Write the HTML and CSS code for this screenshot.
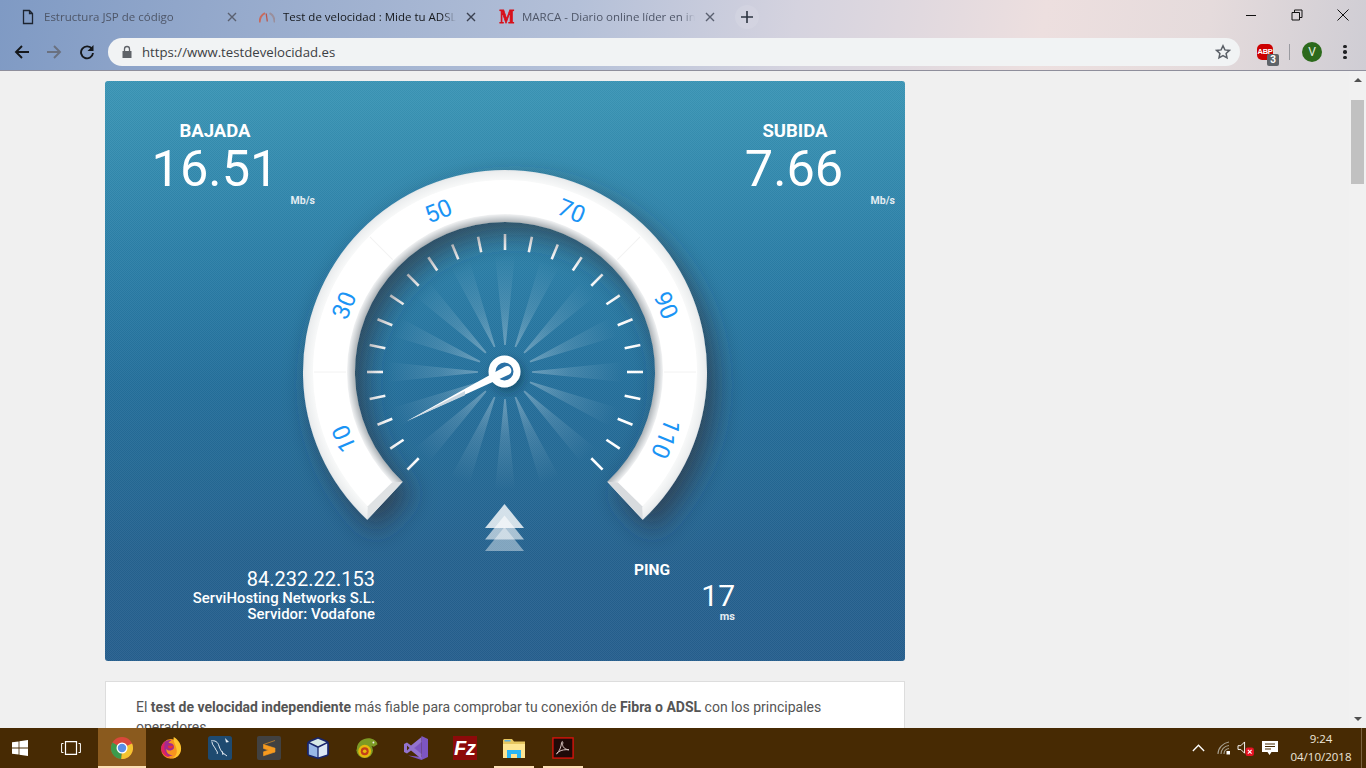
FILE: index.html
```html
<!DOCTYPE html>
<html lang="es">
<head>
<meta charset="utf-8">
<title>Test de velocidad</title>
<link rel="stylesheet" href="styles.css">
</head>
<body>
<header class="browser">
  <div class="tabstrip">
    <div class="tab">
      <svg class="favicon" viewBox="0 0 16 16"><path d="M3.500 1.500h6l3 3v10h-9z M9.500 1.500v3h3" fill="none" stroke="#1d2430" stroke-width="1.300"/></svg>
      <span class="tab-title muted">Estructura JSP de código</span>
      <svg class="tab-close" viewBox="0 0 12 12"><path d="M2 2l8 8M10 2l-8 8" stroke="#5a6070" stroke-width="1.400"/></svg>
    </div>
    <div class="tab">
      <svg class="favicon" viewBox="0 0 16 16"><path d="M.5 13.500C.8 9 3 5.500 6 4.200" fill="none" stroke="#c96a5c" stroke-width="2"/><path d="M10.500 4.200c3 1.300 5 4.800 5.200 9.300" fill="none" stroke="#9a8f9c" stroke-width="2"/><path d="M8.300 12.500L7.200 4.500" stroke="#b8564c" stroke-width="1.300"/></svg>
      <span class="tab-title">Test de velocidad : Mide tu ADSL</span>
      <svg class="tab-close" viewBox="0 0 12 12"><path d="M2 2l8 8M10 2l-8 8" stroke="#3a4050" stroke-width="1.400"/></svg>
    </div>
    <div class="tab">
      <span class="favicon marca">M</span>
      <span class="tab-title muted">MARCA - Diario online líder en información</span>
      <svg class="tab-close" viewBox="0 0 12 12"><path d="M2 2l8 8M10 2l-8 8" stroke="#5a6070" stroke-width="1.400"/></svg>
    </div>
    <div class="new-tab"><svg viewBox="0 0 12 12"><path d="M6 0v12M0 6h12" stroke="#2c3440" stroke-width="1.600"/></svg></div>
    <div class="win-controls">
      <div class="win-btn"><svg viewBox="0 0 12 12"><path d="M1 6.500h10" stroke="#111" stroke-width="1"/></svg></div>
      <div class="win-btn"><svg viewBox="0 0 12 12"><path d="M1 3.500h7.500v7.500H1z M3.500 3.500V1H11v7.500H8.500" fill="none" stroke="#111" stroke-width="1"/></svg></div>
      <div class="win-btn"><svg viewBox="0 0 12 12"><path d="M.5.500l11 11M11.500.500l-11 11" stroke="#111" stroke-width="1"/></svg></div>
    </div>
  </div>
  <div class="toolbar">
    <div class="nav-btn"><svg viewBox="0 0 16 16"><path d="M15 8H2M8 2L2 8l6 6" fill="none" stroke="#15181c" stroke-width="1.900"/></svg></div>
    <div class="nav-btn"><svg viewBox="0 0 16 16"><path d="M1 8h13M8 2l6 6-6 6" fill="none" stroke="#6a7180" stroke-width="1.900"/></svg></div>
    <div class="nav-btn reload"><svg viewBox="0 0 16 16"><path d="M13 5A6 6 0 1 0 14 9" fill="none" stroke="#15181c" stroke-width="1.900"/><path d="M14.500 1v6h-6z" fill="#15181c"/></svg></div>
    <div class="omnibox">
      <svg class="lock" viewBox="0 0 12 14"><path d="M1.500 6h9v7h-9z" fill="#5f6368"/><path d="M3.500 6V4a2.500 2.500 0 0 1 5 0v2" fill="none" stroke="#5f6368" stroke-width="1.300"/></svg>
      <span class="url">https://www.testdevelocidad.es</span>
      <svg class="star" viewBox="0 0 16 16"><path d="M8 1.800l1.900 4.100 4.500.5-3.300 3 .9 4.500L8 11.700l-4 2.200.9-4.500-3.300-3 4.500-.5z" fill="none" stroke="#5a5f66" stroke-width="1.500"/></svg>
    </div>
    <div class="abp"><span class="abp-sign">ABP</span><span class="abp-badge">3</span></div>
    <div class="tool-divider"></div>
    <div class="avatar">V</div>
    <div class="menu-dots"><i></i><i></i><i></i></div>
  </div>
</header>

<div class="viewport">
  <main class="page">
    <section class="panel">
      <svg class="gauge" viewBox="0 0 800 580">
        <defs>
          <radialGradient id="rayFade" gradientUnits="userSpaceOnUse" cx="0" cy="0" r="118">
            <stop offset=".2" stop-color="#fff" stop-opacity=".32"/>
            <stop offset=".55" stop-color="#fff" stop-opacity=".13"/>
            <stop offset="1" stop-color="#fff" stop-opacity="0"/>
          </radialGradient>
          <radialGradient id="bevel" gradientUnits="userSpaceOnUse" cx="0" cy="0" r="202">
            <stop offset=".7426" stop-color="#adb2b6"/>
            <stop offset=".76" stop-color="#ccd0d3"/>
            <stop offset=".782" stop-color="#f2f3f4"/>
            <stop offset=".95" stop-color="#f8f9f9"/>
            <stop offset=".99" stop-color="#eceeef"/>
            <stop offset="1" stop-color="#e4e6e8"/>
          </radialGradient>
          <filter id="ringShadow" x="-30%" y="-30%" width="160%" height="160%">
            <feDropShadow dx="9" dy="12" stdDeviation="13" flood-color="#33333a" flood-opacity=".65"/>
          </filter>
          <filter id="hubShadow" x="-50%" y="-50%" width="200%" height="200%">
            <feDropShadow dx="3" dy="4" stdDeviation="4" flood-color="#123" flood-opacity=".4"/>
          </filter>
          <path id="ray" d="M-.8 -27 L.8 -27 L10 -118 L-10 -118 Z" fill="url(#rayFade)"/>
          <line id="tick" x1="0" y1="-122" x2="0" y2="-138" stroke="#fff" stroke-width="2.600"/>
          <line id="seam" x1="0" y1="-159" x2="0" y2="-191" stroke="#f2f2f2" stroke-width="1"/>
        </defs>
        <g transform="translate(400 291)">
          <g>
            <use href="#ray"/><use href="#ray" transform="rotate(22.5)"/><use href="#ray" transform="rotate(45)"/><use href="#ray" transform="rotate(67.5)"/>
            <use href="#ray" transform="rotate(90)"/><use href="#ray" transform="rotate(112.5)"/><use href="#ray" transform="rotate(135)"/><use href="#ray" transform="rotate(157.5)"/>
            <use href="#ray" transform="rotate(180)"/><use href="#ray" transform="rotate(202.5)"/><use href="#ray" transform="rotate(225)"/><use href="#ray" transform="rotate(247.5)"/>
            <use href="#ray" transform="rotate(270)"/><use href="#ray" transform="rotate(292.5)"/><use href="#ray" transform="rotate(315)"/><use href="#ray" transform="rotate(337.5)"/>
          </g>
          <g>
            <use href="#tick" transform="rotate(-135)"/><use href="#tick" transform="rotate(-123.75)"/><use href="#tick" transform="rotate(-112.5)"/><use href="#tick" transform="rotate(-101.25)"/>
            <use href="#tick" transform="rotate(-90)"/><use href="#tick" transform="rotate(-78.75)"/><use href="#tick" transform="rotate(-67.5)"/><use href="#tick" transform="rotate(-56.25)"/>
            <use href="#tick" transform="rotate(-45)"/><use href="#tick" transform="rotate(-33.75)"/><use href="#tick" transform="rotate(-22.5)"/><use href="#tick" transform="rotate(-11.25)"/>
            <use href="#tick"/>
            <use href="#tick" transform="rotate(11.25)"/><use href="#tick" transform="rotate(22.5)"/><use href="#tick" transform="rotate(33.75)"/><use href="#tick" transform="rotate(45)"/>
            <use href="#tick" transform="rotate(56.25)"/><use href="#tick" transform="rotate(67.5)"/><use href="#tick" transform="rotate(78.75)"/><use href="#tick" transform="rotate(90)"/>
            <use href="#tick" transform="rotate(101.25)"/><use href="#tick" transform="rotate(112.5)"/><use href="#tick" transform="rotate(123.75)"/><use href="#tick" transform="rotate(135)"/>
          </g>
          <path filter="url(#ringShadow)" fill="url(#bevel)" d="M-137.800 147.700A202 202 0 1 1 137.800 147.700L102.300 109.700A150 150 0 1 0 -102.300 109.700Z"/>
          <path fill="#fff" d="M-137.200 134.300A192 192 0 1 1 137.200 134.300L112.900 110.600A158 158 0 1 0 -112.900 110.600Z"/>
          <path fill="#dfe2e4" d="M-137.800 147.700L-102.300 109.700L-112.900 110.600L-137.200 134.300Z"/>
          <path fill="#d8dbde" d="M137.800 147.700L102.300 109.700L112.900 110.600L137.200 134.300Z"/>
          <use href="#seam" transform="rotate(-90)"/><use href="#seam" transform="rotate(-45)"/><use href="#seam" transform="rotate(45)"/><use href="#seam" transform="rotate(90)"/>
          <g class="scale">
            <text transform="rotate(-112.5) translate(0 -166)">10</text>
            <text transform="rotate(-67.5) translate(0 -166)">30</text>
            <text transform="rotate(-22.5) translate(0 -166)">50</text>
            <text transform="rotate(22.5) translate(0 -166)">70</text>
            <text transform="rotate(67.5) translate(0 -166)">90</text>
            <text transform="rotate(112.5) translate(0 -166)">110</text>
          </g>
          <circle cx="-.5" cy="-.5" r="12.500" fill="#2a6fa5" stroke="#fff" stroke-width="7" filter="url(#hubShadow)"/>
          <path d="M-98 49 L.2 -5.600 A4.500 4.500 0 0 1 4.200 2.400 Z" fill="#fff"/>
          <path d="M-98 49 L-40 19 L-40 23.200 Z" fill="#c9d6e0"/>
        </g>
        <g class="stack">
          <path d="M399.500 423l19.500 24h-39z" opacity=".8"/>
          <path d="M399.500 434.500l19.500 24h-39z" opacity=".6"/>
          <path d="M399.500 446l19.500 24h-39z" opacity=".42"/>
        </g>
      </svg>
      <div class="readouts">
        <div class="stats-top">
          <div class="stat stat-down">
            <div class="stat-label">BAJADA</div>
            <div class="stat-value">16.51</div>
            <div class="stat-unit">Mb/s</div>
          </div>
          <div class="stat stat-up">
            <div class="stat-label">SUBIDA</div>
            <div class="stat-value">7.66</div>
            <div class="stat-unit">Mb/s</div>
          </div>
        </div>
        <div class="stats-bottom">
          <div class="connection">
            <div class="ip">84.232.22.153</div>
            <div class="isp">ServiHosting Networks S.L.</div>
            <div class="isp">Servidor: Vodafone</div>
          </div>
          <div class="ping">
            <div class="ping-label">PING</div>
            <div class="ping-value">17</div>
            <div class="ping-unit">ms</div>
          </div>
        </div>
      </div>
    </section>
    <section class="intro">
      <p>El <strong>test de velocidad independiente</strong> más fiable para comprobar tu conexión de <strong>Fibra o ADSL</strong> con los principales operadores</p>
    </section>
  </main>
  <aside class="scrollbar">
    <div class="arrow-up"></div>
    <div class="thumb"></div>
    <div class="arrow-down"></div>
  </aside>
</div>

<footer class="taskbar">
  <div class="start"><svg viewBox="0 0 16 16"><path d="M0 2.300l6.600-.9v6.200H0zM7.400 1.300L16 0v7.600H7.400zM0 8.400h6.600v6.200L0 13.700zM7.400 8.400H16V16l-8.600-1.300z" fill="#fff"/></svg></div>
  <div class="taskview"><svg viewBox="0 0 20 14"><path d="M4.500 .6h11v12.800h-11z" fill="none" stroke="#fff" stroke-width="1.200"/><path d="M2.500 2.500H.6v9h1.900M17.500 2.500h1.900v9h-1.900" fill="none" stroke="#fff" stroke-width="1"/></svg></div>
  <div class="app active">
    <svg class="ico-22" viewBox="0 0 24 24"><circle cx="12" cy="12" r="12" fill="#d9483b"/><path d="M12 12L23 7.200A12 12 0 0 1 11 24z" fill="#f4c430"/><path d="M12 12L11 24A12 12 0 0 1 1.500 6z" fill="#3c9a4c"/><circle cx="12" cy="12" r="6" fill="#fff"/><circle cx="12" cy="12" r="4.600" fill="#5a8fe6"/></svg>
  </div>
  <div class="app">
    <svg class="ico-22" viewBox="0 0 24 24"><circle cx="12" cy="13" r="10.800" fill="#f7941e"/><path d="M1.300 12C2 6 7 2.500 12.500 3.500c-2 1-3 2-3 3 4.500-.5 6.500 3 5.500 6-2 3-7 3-8 .3-.8 4 3 7.500 7 6.900C9 23 1.300 19 1.300 12z" fill="#a32a8f"/><path d="M1.300 12c.5-3 2-5 4-6.500 0 3-1.500 6 0 10 1 3 3 5.500 6 6.500C6 22.500 1.300 18 1.300 12z" fill="#e0245e"/><path d="M15 0c5 3 8 7.500 8 12.500 0 6-4.500 10.500-10 11 4.500-2.500 6-6 5-10.500C17 8 14 5 15 0z" fill="#ffc52e"/><path d="M8.500 9.500h6.500l-2 2.800H9.500z" fill="#e8352c"/></svg>
  </div>
  <div class="app">
    <svg viewBox="0 0 24 24"><rect width="24" height="24" rx="2.500" fill="#1e4a70"/><path d="M3 5c4-1 7 1 8 5 1 3 2 5 4 7l4 3M4 6c0 3 3 5 4 8 1 1 2 3 1 4M14 15l1 4" fill="none" stroke="#e0e8f0" stroke-width="1"/><path d="M17 2l4 4-3 .5z" fill="#e8eef4"/></svg>
  </div>
  <div class="app">
    <svg viewBox="0 0 24 24"><rect width="24" height="24" rx="2" fill="#414141"/><path d="M18 4.500L6.500 8.500v4l11 3.500v-4l-11-3.500M18 12l-11.500 3.800v4L18 16z" fill="#f79a1e" stroke="#f79a1e" stroke-width=".6"/></svg>
  </div>
  <div class="app">
    <svg class="ico-22" viewBox="0 0 24 24"><path d="M12 0l10 4q2 1 2 3v11q0 2-2 3l-10 3-10-3q-2-1-2-3V7q0-2 2-3z" fill="#18246a"/><path d="M12 2l9 3.600-9 4.400-9-4.400z" fill="#d6e8e6"/><path d="M2 7l9.300 4.700V22L2 19z" fill="#98b8e6"/><path d="M22 7l-9.300 4.700V22L22 19z" fill="#dce8f4"/></svg>
  </div>
  <div class="app">
    <svg class="ico-22" viewBox="0 0 24 24"><ellipse cx="9.500" cy="14.500" rx="9" ry="8.500" fill="#7d9a24"/><path d="M1 12C2 4 10 0 17 2c3 1 6 3 6.500 6l-4 2.500c-3-1-5-1-7-.5L3 18z" fill="#7d9a24"/><circle cx="9.500" cy="15.500" r="7" fill="#e6b80c"/><circle cx="9.500" cy="15.500" r="4.300" fill="#c2401a"/><circle cx="9.500" cy="15.500" r="2" fill="#e6b80c"/><circle cx="19" cy="6" r="1" fill="#eee"/></svg>
  </div>
  <div class="app">
    <svg viewBox="0 0 24 24"><path d="M17.500 0L24 3v18l-6.500 3L4 19.500l13.500 1.500z" fill="#7d55c2"/><path d="M17.500 5v14L10 12z" fill="#7d55c2"/><path d="M0 8l3-1.500 4 3L17.500 1v5l-7 6 7 6v5L7 14.500l-4 3L0 16z" fill="#9373cf"/><path d="M3 9.500v5l2.500-2.500z" fill="#472a03"/></svg>
  </div>
  <div class="app">
    <span class="fz">Fz</span>
  </div>
  <div class="app open">
    <svg class="ico-folder" viewBox="0 0 22 19"><path d="M1 0h8l2 2.500h11V19H0V1z" fill="#e6c660"/><path d="M0 5h22v14H0z" fill="#fde592"/><path d="M1.500 1h6v1.500h-6z" fill="#5db0e0"/><path d="M4 11h14v8h-4v-4H8v4H4z" fill="#29b6f6"/></svg>
  </div>
  <div class="app open">
    <svg class="ico-22" viewBox="0 0 24 24"><rect x="1" y="1" width="22" height="22" fill="#1f0a08" stroke="#d8140c" stroke-width="1.500"/><path d="M5 18c3-2 5-7 5.500-12 .3-2 2-1 1 2 0 3 2.500 5.500 7 6-4-.5-8 0-11 2-1.500 2-3 3-2.500 2z" fill="none" stroke="#e8d4d0" stroke-width="1"/></svg>
  </div>
  <div class="tray">
    <svg class="tray-chevron" viewBox="0 0 12 7"><path d="M.8 6.300L6 1l5.200 5.300" fill="none" stroke="#fff" stroke-width="1.200"/></svg>
    <svg class="tray-wifi" viewBox="0 0 14 14"><path d="M1 13C1 7 6 2 12 1M4 13c0-4 3-8 8-8.500M7 13c0-3 2-5 5-5.500" fill="none" stroke="#a8a090" stroke-width="1.100"/><rect x="9.500" y="10" width="3.500" height="3.500" fill="#fff"/></svg>
    <svg class="tray-sound" viewBox="0 0 18 16"><path d="M1 5h3l4-4v12l-4-4H1z" fill="none" stroke="#fff" stroke-width="1"/><rect x="9" y="7" width="9" height="9" rx="2.500" fill="#e81123"/><path d="M11.500 9.500l4 4M15.500 9.500l-4 4" stroke="#fff" stroke-width="1.200"/></svg>
    <svg class="tray-action" viewBox="0 0 16 16"><path d="M0 1h16v11H9.500L7.500 15l-2-3H0z" fill="#fff"/><path d="M3 4h10M3 6.500h10M3 9h6" stroke="#472a03" stroke-width="1"/></svg>
    <div class="clock"><div>9:24</div><div>04/10/2018</div></div>
    <div class="show-desktop"></div>
  </div>
</footer>
</body>
</html>
```

FILE: styles.css
```css
* { box-sizing: border-box; }
html, body { margin: 0; height: 768px; overflow: hidden; }
body { display: flex; flex-direction: column; width: 1366px; font-family: Roboto, "Liberation Sans", sans-serif; background: #f0f0f0; color: #555; }

/* browser frame */
.browser { height: 71px; flex: none; border-bottom: 1px solid #8f8f9c; background: linear-gradient(100deg, #7f9ac4 0, #93a8cb 15%, #b4c0d8 42%, #d5d3df 58%, #eddfdf 76%, #e5dbdc 88%, #cfcdd4 100%); }
.tabstrip { height: 34px; display: flex; align-items: center; padding-left: 12px; }
.tab { width: 239px; height: 34px; display: flex; align-items: center; padding: 0 13px 0 8px; }
.favicon { width: 16px; height: 16px; flex: none; }
.marca { font: 900 19px/16px "Liberation Serif", serif; color: #d8101a; text-align: center; -webkit-text-stroke: .8px #d8101a; transform: scaleX(.82); }
.tab-title { flex: none; width: 173px; margin: 0 9px 0 8px; font: 11.500px/16px "Open Sans", sans-serif; color: #15181c; white-space: nowrap; overflow: hidden; mask-image: linear-gradient(90deg, #000 92%, transparent); }
.tab-title.muted { color: #4e5668; }
.tab-close { width: 12px; height: 12px; flex: none; }
.new-tab { width: 24px; height: 24px; margin-left: 6px; border-radius: 50%; background: rgba(255,255,255,.1); display: flex; align-items: center; justify-content: center; }
.new-tab svg { width: 12px; height: 12px; }
.win-controls { margin-left: auto; display: flex; align-self: flex-start; }
.win-btn { width: 46px; height: 29px; display: flex; align-items: center; justify-content: center; }
.win-btn svg { width: 12px; height: 12px; }

.toolbar { height: 36px; padding: 4px 0 4px 6px; display: flex; align-items: center; }
.nav-btn { width: 32px; height: 28px; display: flex; align-items: center; justify-content: center; }
.nav-btn svg { width: 16px; height: 16px; }
.reload { margin-left: 1px; }
.omnibox { width: 1132px; height: 28px; margin-left: 5px; padding: 0 9px 0 13px; border-radius: 14px; background: #f1f3f4; display: flex; align-items: center; }
.lock { width: 12px; height: 14px; flex: none; }
.url { margin-left: 9px; flex: 1; font: 13.200px/18px "Open Sans", sans-serif; color: #3c4043; }
.star { width: 16px; height: 16px; flex: none; }
.abp { position: relative; width: 16px; height: 16px; margin-left: 17px; }
.abp-sign { display: block; width: 16px; height: 16px; border-radius: 5px; background: #cc0000; color: #fff; font: 700 7.500px/16px "Liberation Sans", sans-serif; letter-spacing: -.3px; text-align: center; }
.abp-badge { position: absolute; left: 10px; top: 10px; width: 12px; height: 12px; border-radius: 2px; background: #5f6368; color: #fff; font: 700 10px/12px Roboto, sans-serif; text-align: center; }
.tool-divider { width: 1px; height: 16px; margin-left: 16px; background: #9a9aa0; }
.avatar { width: 20px; height: 20px; margin-left: 12px; border-radius: 50%; background: #2c6a1c; color: #e8f0e4; font: 12px/20px Roboto, sans-serif; text-align: center; }
.menu-dots { margin-left: 21px; width: 4px; display: flex; flex-direction: column; gap: 2px; }
.menu-dots i { display: block; width: 3.500px; height: 3.500px; border-radius: 50%; background: #202124; }

/* page */
.viewport { flex: 1; min-height: 0; display: flex; }
.page { flex: 1; min-width: 0; padding: 10px 0 0 105px; overflow: hidden; }
.panel { width: 800px; height: 580px; display: grid; border-radius: 3px; overflow: hidden; background: repeating-conic-gradient(rgba(255,255,255,.05) 0 25%, rgba(0,0,0,.025) 0 50%) 0 0 / 2px 2px, linear-gradient(180deg, #3b96b6 0, #2b7fa8 30%, #24709c 52%, #25628f 82%, #265f8e 100%); color: #fff; }
.gauge { grid-area: 1 / 1; width: 800px; height: 580px; display: block; }
.scale text { font: 400 24px Roboto, sans-serif; fill: #1a94f5; text-anchor: middle; }
.stack path { fill: #fff; }
.readouts { grid-area: 1 / 1; display: flex; flex-direction: column; justify-content: space-between; padding: 40px 0 39px; }
.stats-top { display: flex; justify-content: space-between; }
.stat { display: flex; flex-direction: column; align-items: center; }
.stat-down { width: 122px; margin-left: 49px; }
.stat-up { width: 96px; margin-right: 63px; }
.stat-label { font: 700 18.500px/20px Roboto, sans-serif; white-space: nowrap; }
.stat-up .stat-label { margin-left: 2px; }
.stat-value { margin-top: 2px; font: 400 50.500px/52px Roboto, sans-serif; white-space: nowrap; }
.stat-unit { align-self: flex-end; margin-top: 1px; font: 700 10.500px/10px Roboto, sans-serif; color: #e4ecf2; }
.stat-down .stat-unit { margin-right: -39px; }
.stat-up .stat-unit { margin-right: -53px; }
.stats-bottom { display: flex; align-items: flex-end; }
.connection { width: 270px; text-align: right; }
.ip { margin-bottom: 1px; font: 400 20px/20px Roboto, sans-serif; }
.isp { font: 500 14.900px/16px Roboto, sans-serif; white-space: nowrap; }
.ping { width: 101px; margin-left: 259px; display: flex; flex-direction: column; }
.ping-label { font: 700 15.500px/16px Roboto, sans-serif; }
.ping-value { align-self: flex-end; font: 400 30px/35px Roboto, sans-serif; }
.ping-unit { align-self: flex-end; margin-top: -1px; font: 700 11px/10px Roboto, sans-serif; color: #e4ecf2; }
.intro { width: 800px; margin-top: 20px; padding: 15px 30px; border: 1px solid #ddd; background: #fff; }
.intro p { margin: 0; font: 400 14px/20px Roboto, sans-serif; color: #555; }
.intro strong { font-weight: 700; }

.scrollbar { width: 17px; flex: none; background: #f1f1f1; display: flex; flex-direction: column; align-items: center; padding-top: 7px; }
.arrow-up { width: 0; height: 0; border: 4px solid transparent; border-top: 0; border-bottom: 4px solid #505050; }
.thumb { width: 13px; height: 84px; margin-top: 18px; background: #c1c1c1; }
.arrow-down { width: 0; height: 0; margin-top: auto; margin-bottom: 7px; border: 4px solid transparent; border-bottom: 0; border-top: 4px solid #505050; }

/* taskbar */
.taskbar { height: 40px; flex: none; background: #472a03; display: flex; align-items: center; }
.start { width: 40px; display: flex; justify-content: center; }
.start svg { width: 16px; height: 16px; }
.taskview { width: 58px; padding-left: 21px; display: flex; }
.taskview svg { width: 20px; height: 14px; }
.app { position: relative; width: 48px; height: 40px; margin-right: 1px; display: flex; align-items: center; justify-content: center; }
.app svg { width: 24px; height: 24px; }
.app svg.ico-22 { width: 22px; height: 22px; }
.app svg.ico-folder { width: 22px; height: 19px; }
.app.active { background: #8a5a1e; }
.app.active::after, .app.open::after { content: ""; position: absolute; bottom: 0; height: 2px; background: #fbdfb4; }
.app.active::after { left: 0; right: 0; }
.app.open::after { left: 4px; right: 4px; }
.fz { width: 24px; height: 24px; background: #8c0a0a; color: #fff; font: italic 700 20px/24px "Liberation Sans", sans-serif; text-align: center; }
.tray { margin-left: auto; height: 40px; display: flex; align-items: center; }
.tray-chevron { width: 13px; height: 8px; }
.tray-wifi { width: 14px; height: 14px; margin-left: 12px; }
.tray-sound { width: 17px; height: 15px; margin-left: 6px; }
.tray-action { width: 16px; height: 16px; margin-left: 8px; }
.clock { width: 66px; margin-left: 10px; color: #eee6da; font: 11.500px/18px "Open Sans", sans-serif; text-align: center; }
.show-desktop { width: 1px; height: 40px; margin-left: 7px; margin-right: 4px; background: #7a6240; }
```
